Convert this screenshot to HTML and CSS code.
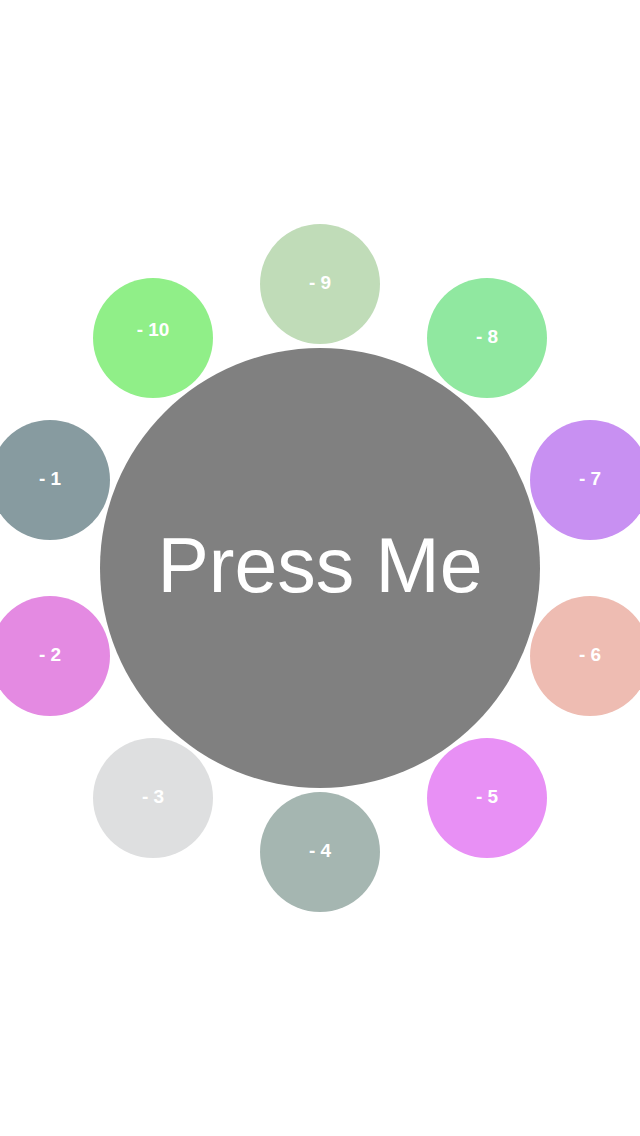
FILE: index.html
```html
<!DOCTYPE html>
<html>
<head>
<meta charset="utf-8">
<link rel="stylesheet" href="styles.css">
</head>
<body>
<div class="stage">
  <div class="node n9"><span>- 9</span></div>
  <div class="node n10"><span class="up">- 10</span></div>
  <div class="node n8"><span>- 8</span></div>
  <div class="node n1"><span>- 1</span></div>
  <div class="node n7"><span>- 7</span></div>
  <button class="press">Press Me</button>
  <div class="node n2"><span>- 2</span></div>
  <div class="node n6"><span>- 6</span></div>
  <div class="node n3"><span>- 3</span></div>
  <div class="node n5"><span>- 5</span></div>
  <div class="node n4"><span>- 4</span></div>
</div>
</body>
</html>
```
FILE: styles.css
```css
html, body {
  margin: 0;
  padding: 0;
  background: #ffffff;
}
.stage {
  position: relative;
  width: 640px;
  height: 1136px;
  overflow: hidden;
  font-family: "Liberation Sans", Arial, sans-serif;
}
.press {
  position: absolute;
  left: 100px;
  top: 348px;
  width: 440px;
  height: 440px;
  border: none;
  border-radius: 50%;
  background: #808080;
  color: #ffffff;
  font-family: "Liberation Sans", Arial, sans-serif;
  font-size: 77px;
  font-weight: normal;
  padding: 0 0 6px 0;
  display: flex;
  align-items: center;
  justify-content: center;
}
.node {
  position: absolute;
  width: 120px;
  height: 120px;
  margin: -60px 0 0 -60px;
  border-radius: 50%;
  display: flex;
  align-items: center;
  justify-content: center;
  color: #ffffff;
  font-size: 19px;
  font-weight: bold;
}
.node span {
  margin-bottom: 3px;
}
.node span.up {
  margin-bottom: 17px;
}
.n9  { left: 320px; top: 284px; background: #c0dcb8; }
.n8  { left: 487px; top: 338px; background: #90e8a0; }
.n7  { left: 590px; top: 480px; background: #c890f2; }
.n6  { left: 590px; top: 656px; background: #eebcb2; }
.n5  { left: 487px; top: 798px; background: #e890f5; }
.n4  { left: 320px; top: 852px; background: #a5b6b1; }
.n3  { left: 153px; top: 798px; background: #dedfe0; }
.n2  { left: 50px;  top: 656px; background: #e48ae2; }
.n1  { left: 50px;  top: 480px; background: #879ba0; }
.n10 { left: 153px; top: 338px; background: #90ef88; }
```
